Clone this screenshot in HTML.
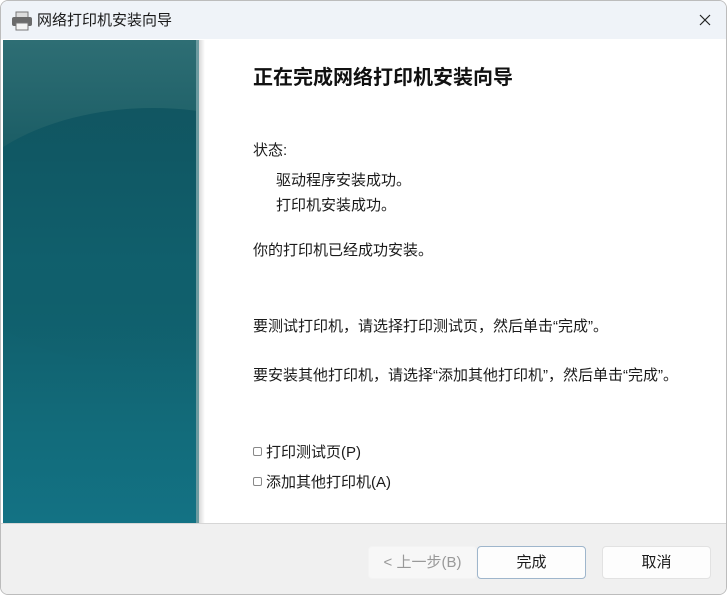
<!DOCTYPE html>
<html><head><meta charset="utf-8"><style>
*{margin:0;padding:0;box-sizing:border-box}
body{width:727px;height:595px;background:#fff;font-family:"Liberation Sans","Noto Sans CJK SC",sans-serif;color:#000;position:relative;overflow:hidden}
.win{position:absolute;inset:0;border:1px solid #bcbcbc;border-radius:8px;overflow:hidden;background:#fff}
.title{position:absolute;left:0;top:0;width:727px;height:38px;background:#eff3f8}
.title span{position:absolute;left:36px;top:8px;font-size:15px;color:#1a1a1a}
.side{position:absolute;left:2px;top:39px;width:196px;height:483px;overflow:hidden;
background:linear-gradient(180deg,#2e6e74 0%,#1d5f67 20%,#0f5763 40%,#126b7a 80%,#137284 100%)}
.side .arc{position:absolute;left:-60px;top:68px;width:420px;height:260px;border-radius:50%;background:linear-gradient(180deg,#0f5460 0%,#10606d 60%,rgba(16,96,109,0) 100%);opacity:.9}
.side .edge{position:absolute;right:0;top:0;width:3px;height:100%;background:#6c9ba0}
.shadow{position:absolute;left:198px;top:39px;width:6px;height:483px;background:linear-gradient(90deg,#d8d8d8,#fff)}
.t{position:absolute;font-size:15px;color:#1a1a1a;white-space:nowrap}
h1{position:absolute;left:252px;top:60px;font-size:20px;font-weight:bold;color:#111}
.footer{position:absolute;left:0;top:522px;width:727px;height:73px;background:#f0f0f0;border-top:1px solid #d6d6d6}
.btn{position:absolute;top:545px;height:33px;width:109px;background:#fdfdfd;border:1px solid #e2e2e2;border-radius:4px;font-size:15px;text-align:center;line-height:31px;color:#1a1a1a}
.cb{display:inline-block;width:9px;height:9px;border:1px solid #888;border-radius:2px;margin-right:4px;vertical-align:1px}
</style></head><body><div class="win">
<div class="title">
<svg style="position:absolute;left:10px;top:10px" width="22" height="20" viewBox="0 0 22 20"><rect x="5" y="1" width="12" height="6" fill="#ddd" stroke="#777"/><rect x="1" y="6" width="20" height="9" rx="2" fill="#6b6b6b"/><rect x="5" y="12" width="12" height="7" fill="#f4f4f4" stroke="#777"/></svg>
<span>网络打印机安装向导</span>
<svg style="position:absolute;left:698px;top:13px" width="12" height="12" viewBox="0 0 12 12"><path d="M1 1L11 11M11 1L1 11" stroke="#222" stroke-width="1.2"/></svg></div>
<div class="side"><div class="arc"></div><div class="edge"></div></div>
<div class="shadow"></div>
<h1>正在完成网络打印机安装向导</h1>
<div class="t" style="left:252px;top:138px">状态:</div>
<div class="t" style="left:275px;top:168px">驱动程序安装成功。</div>
<div class="t" style="left:275px;top:193px">打印机安装成功。</div>
<div class="t" style="left:252px;top:238px">你的打印机已经成功安装。</div>
<div class="t" style="left:252px;top:314px">要测试打印机，请选择打印测试页，然后单击“完成”。</div>
<div class="t" style="left:252px;top:363px">要安装其他打印机，请选择“添加其他打印机”，然后单击“完成”。</div>
<div class="t" style="left:252px;top:440px"><span class="cb"></span>打印测试页(P)</div>
<div class="t" style="left:252px;top:470px"><span class="cb"></span>添加其他打印机(A)</div>
<div class="footer"></div>
<div class="btn" style="left:367px;color:#999;background:#f7f7f7;border-color:#f3f3f3">&lt; 上一步(B)</div>
<div class="btn" style="left:476px;border-color:#9fb6cc">完成</div>
<div class="btn" style="left:601px">取消</div>
</div></body></html>
